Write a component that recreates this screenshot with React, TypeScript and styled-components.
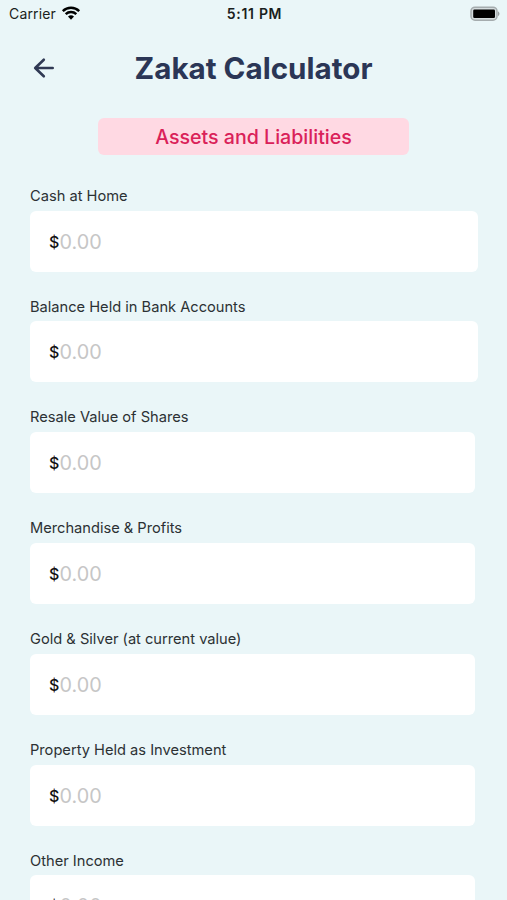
import React from 'react';
import styled, { createGlobalStyle } from 'styled-components';

const Global = createGlobalStyle`
  * { box-sizing: border-box; }
  body { margin: 0; background: #eaf6f8; }
`;
const Screen = styled.main`
  width: 507px; height: 900px; overflow: hidden;
  background: #eaf6f8; font-family: Inter, sans-serif; color: #2c3134;
`;
const StatusBar = styled.div`
  height: 28px; display: grid; grid-template-columns: 1fr auto 1fr; align-items: center;
  padding: 0 7px 2px 9px; font-size: 14px; color: #1a1e20;
`;
const Carrier = styled.div`display: flex; align-items: center; gap: 5px; letter-spacing: 0.15px;`;
const Clock = styled.div`font-weight: 600; letter-spacing: 0.7px;`;
const Battery = styled.div`display: flex; justify-content: flex-end; padding-top: 1px;`;
const Header = styled.header`
  height: 80px; display: grid; grid-template-columns: 60px 1fr 60px; align-items: center;
  padding: 0 30px;
`;
const Back = styled.button`border: 0; background: none; padding: 0 0 0 2px; display: flex;`;
const Title = styled.h1`
  margin: 0; text-align: center; font-size: 29.6px; line-height: 40px; font-weight: 700; color: #2b3656; white-space: nowrap;
`;
const Banner = styled.h2`
  margin: 10px auto 0; width: 311px; height: 37px; border-radius: 6px; background: #ffd9e3;
  color: #da2159; font-size: 19.6px; font-weight: 500; line-height: 38px; text-align: center;
`;
const Form = styled.form`
  margin-top: 29.92px; padding-left: 30px; display: flex; flex-direction: column; gap: 24px;
`;
const Field = styled.label`display: block;`;
const Caption = styled.span`display: block; height: 25.78px; line-height: 22px; font-size: 14.65px;`;
const Amount = styled.span<{ $wide?: boolean }>`
  width: ${p => (p.$wide ? 448 : 445)}px; height: 61px; border-radius: 6px; background: #fff;
  display: flex; align-items: center; padding: 1px 0 0 19px;
`;
const Currency = styled.span`width: 10.5px; font-size: 16px; font-weight: 500; color: #111;`;
const Placeholder = styled.span`font-size: 19.8px; color: #c6c6c6;`;

const fields = ['Cash at Home', 'Balance Held in Bank Accounts', 'Resale Value of Shares', 'Merchandise & Profits', 'Gold & Silver (at current value)', 'Property Held as Investment', 'Other Income'];

export default function App() {
  return (
    <Screen>
      <Global />
      <StatusBar>
        <Carrier>
          <span>Carrier</span>
          <svg width="20" height="16" viewBox="0 0 20 16" fill="none" stroke="#000" strokeWidth="2.5">
            <path d="M1.8 6.1a12 12 0 0 1 16.4 0M4.7 9.2a7.8 7.8 0 0 1 10.6 0" />
            <path d="M7 11.6a4.4 4.4 0 0 1 6 0L10 14.7z" fill="#000" stroke="none" />
          </svg>
        </Carrier>
        <Clock>5:11 PM</Clock>
        <Battery>
          <svg width="30" height="16" viewBox="0 0 30 16">
            <rect x="1" y="1.2" width="26" height="13" rx="4" fill="#d5dcde" stroke="#a5acae" strokeWidth="1.5" />
            <rect x="3.2" y="3.5" width="21.8" height="8.5" rx="1.2" fill="#000" />
            <path d="M28 5.2q3 2.5 0 5z" fill="#999fa1" />
          </svg>
        </Battery>
      </StatusBar>
      <Header>
        <Back type="button" aria-label="Back">
          <svg width="24" height="24" viewBox="0 0 24 24" fill="none" stroke="#303954" strokeWidth="2.6" strokeLinecap="round" strokeLinejoin="round"><path d="M20.7 12H3.5M11.8 3.7L3.2 12l8.6 8.3" /></svg>
        </Back>
        <Title>Zakat Calculator</Title>
      </Header>
      <Banner>Assets and Liabilities</Banner>
      <Form>
        {fields.map((name, i) => (
          <Field key={name}>
            <Caption>{name}</Caption>
            <Amount $wide={i < 2}><Currency>$</Currency><Placeholder>0.00</Placeholder></Amount>
          </Field>
        ))}
      </Form>
    </Screen>
  );
}
